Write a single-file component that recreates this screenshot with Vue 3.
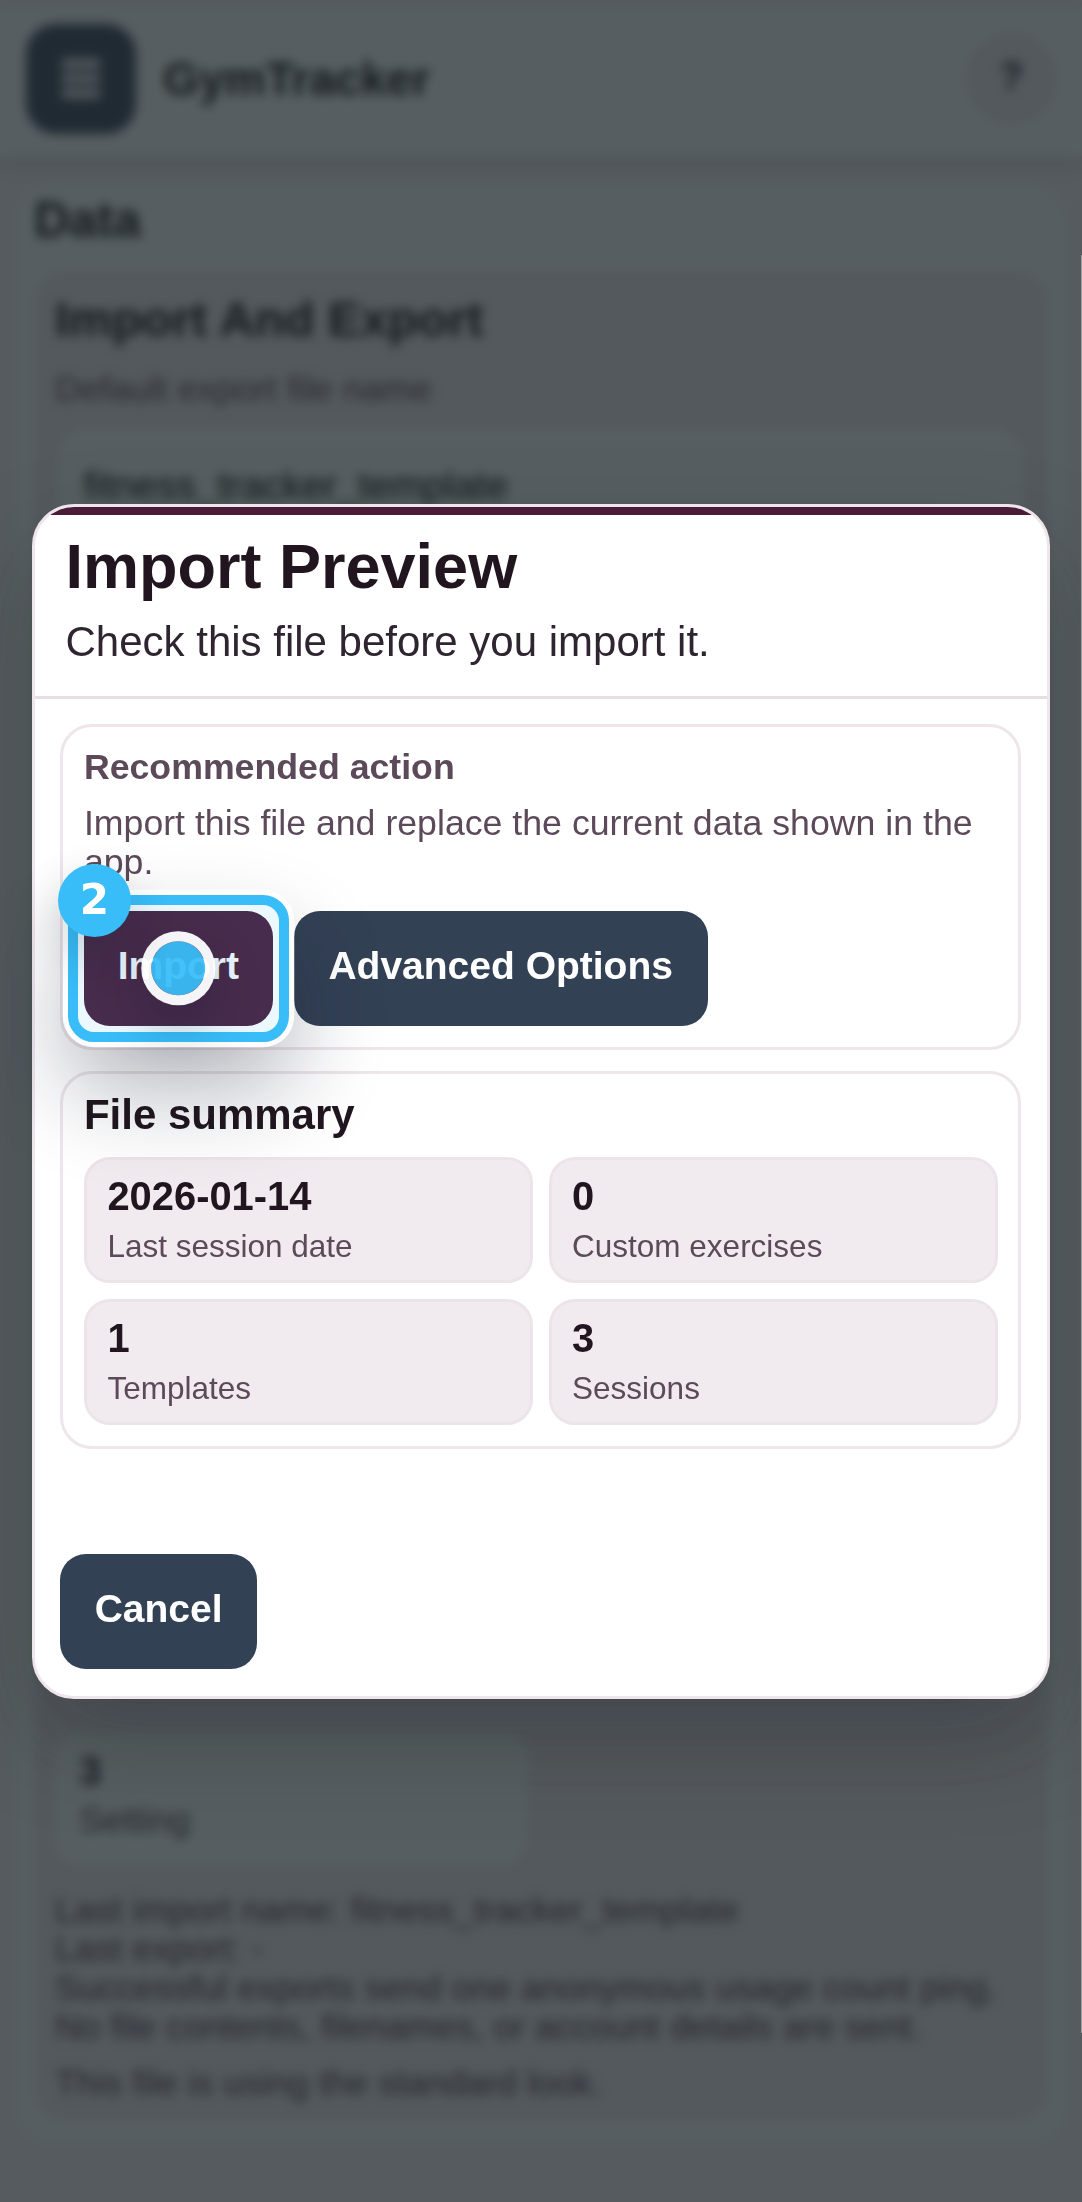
<template>
    <div class="screen">
        <div class="page">
            <header class="topbar">
                <button class="menu-btn" aria-label="Menu">
                    <svg width="38" height="40" viewBox="0 0 38 40">
                        <rect
                            v-for="y in [1, 16, 31]"
                            :key="y"
                            x="0"
                            :y="y"
                            width="38"
                            height="9"
                            fill="#fff"
                        />
                    </svg>
                </button>
                <span class="brand">GymTracker</span>
                <span class="help">?</span>
            </header>

            <main class="section">
                <h2 class="section__title">Data</h2>
                <div class="panel">
                    <h3 class="panel__title">Import And Export</h3>
                    <p class="panel__label">Default export file name</p>
                    <div class="field">fitness_tracker_template</div>
                    <div class="panel__bottom">
                        <div class="setting">
                            <strong>3</strong>
                            <span>Setting</span>
                        </div>
                        <div class="notes">
                            <p v-for="note in notes" :key="note">{{ note }}</p>
                            <p class="notes__last">
                                This file is using the standard look.
                            </p>
                        </div>
                    </div>
                </div>
            </main>
        </div>

        <div class="backdrop">
            <div class="dialog">
                <div class="dialog__head">
                    <h1>Import Preview</h1>
                    <p>Check this file before you import it.</p>
                </div>
                <div class="dialog__body">
                    <section class="box">
                        <h4>Recommended action</h4>
                        <p class="box__text">
                            Import this file and replace the current data shown
                            in the app.
                        </p>
                        <div class="actions">
                            <div class="target">
                                <button class="btn btn--primary">Import</button>
                                <div class="ring"></div>
                                <div class="dot"></div>
                                <div class="badge">2</div>
                            </div>
                            <button class="btn">Advanced Options</button>
                        </div>
                    </section>
                    <section class="box">
                        <h3>File summary</h3>
                        <div class="tiles">
                            <div
                                v-for="item in summary"
                                :key="item.label"
                                class="tile"
                            >
                                <strong>{{ item.value }}</strong>
                                <span>{{ item.label }}</span>
                            </div>
                        </div>
                    </section>
                </div>
                <div class="dialog__foot">
                    <button class="btn">Cancel</button>
                </div>
            </div>
        </div>
        <div class="edge"></div>
    </div>
</template>

<script setup>
const summary = [
    { value: "2026-01-14", label: "Last session date" },
    { value: "0", label: "Custom exercises" },
    { value: "1", label: "Templates" },
    { value: "3", label: "Sessions" },
];

const notes = [
    "Last import name: fitness_tracker_template",
    "Last export: -",
    "Successful exports send one anonymous usage count ping.",
    "No file contents, filenames, or account details are sent.",
];
</script>

<style>
body {
    margin: 0;
    background: #f1ebef;
}
</style>

<style scoped>
.screen {
    position: relative;
    width: 1082px;
    height: 2202px;
    overflow: hidden;
    font-family: "Liberation Sans", Arial, sans-serif;
    color: #21161f;
}

.screen * {
    box-sizing: border-box;
}

h1,
h2,
h3,
h4,
p {
    margin: 0;
}

button {
    font-family: inherit;
    border: 0;
}

/* page behind the dialog */
.page {
    height: 2202px;
    padding-top: 8px;
    background: #f7f3f6;
}

.topbar {
    display: flex;
    align-items: center;
    height: 148px;
    padding: 0 26px 6px 26px;
    background: #fff;
    box-shadow: 0 8px 21px rgba(33, 22, 31, 0.14);
}

.menu-btn {
    display: flex;
    align-items: center;
    justify-content: center;
    width: 110px;
    height: 110px;
    padding: 0 0 2px;
    border-radius: 30px;
    background: #334155;
}

.brand {
    flex: 1;
    margin-left: 27px;
    font-size: 46.2px;
    font-weight: bold;
    color: #0d060c;
}

.help {
    display: flex;
    align-items: center;
    justify-content: center;
    width: 89px;
    height: 89px;
    padding-bottom: 4px;
    margin-top: -2px;
    border: 2px solid #e0d4dc;
    border-radius: 50%;
    background: #f1ebef;
    font-size: 39px;
    font-weight: bold;
}

.section {
    height: 1957px;
    margin: 30px 16px 0;
    padding: 7px 18px;
    border-radius: 36px;
    background: #fff;
}

.section__title {
    height: 78px;
    font-size: 49.3px;
    line-height: 53px;
    color: #0d060c;
}

.panel {
    display: flex;
    flex-direction: column;
    height: 1850px;
    padding: 19px 20px 16px 19px;
    border: 2px solid #ece3e8;
    border-radius: 32px;
    background: #f1ebef;
}

.panel__title {
    font-size: 49px;
    line-height: 54px;
    color: #0d060c;
}

.panel__label {
    margin-top: 24px;
    font-size: 35.7px;
    line-height: 39px;
    color: #5c4a5a;
}

.field {
    height: 118px;
    margin-top: 16px;
    padding: 37px 26px;
    border: 2px solid #e0d4dc;
    border-radius: 32px;
    background: #fff;
    font-size: 39px;
    line-height: 44px;
    color: #000;
}

.panel__bottom {
    margin-top: auto;
}

.setting {
    display: flex;
    flex-direction: column;
    width: 472px;
    height: 132px;
    padding: 16px 24px;
    border-radius: 26px;
    background: #fff;
}

.setting strong {
    font-size: 39.9px;
    line-height: 44px;
}

.setting span {
    margin-top: 8px;
    font-size: 35.7px;
    line-height: 39px;
    color: #4a3a48;
}

.notes {
    margin-top: 26px;
    font-size: 35.7px;
    line-height: 39.3px;
    color: #4f3e4d;
    white-space: nowrap;
}

.notes__last {
    margin-top: 16px;
}

/* dialog */
.backdrop {
    position: absolute;
    inset: 0;
    padding: 504px 32px 0 31.5px;
    background: rgba(25, 34, 39, 0.73);
    backdrop-filter: blur(5.25px);
}

.dialog {
    position: relative;
    display: flex;
    flex-direction: column;
    height: 1194.6px;
    border: 3px solid #eee6eb;
    border-radius: 42px;
    background: #fff;
    box-shadow: 0 42px 94px rgba(15, 18, 24, 0.26);
}

.dialog__head {
    padding: 25px 31px 31px;
    border-top-left-radius: 39px;
    border-top-right-radius: 39px;
    border-bottom: 3px solid #e8dfe5;
    background: linear-gradient(#4a1c3a 7.7px, transparent 7.7px);
}

.dialog__head h1 {
    font-size: 63px;
    line-height: 69px;
}

.dialog__head p {
    margin-top: 18px;
    font-size: 42px;
    line-height: 46px;
    color: #2f2530;
}

.dialog__body {
    display: flex;
    flex-direction: column;
    gap: 21px;
    padding: 25px 26px 0 25.4px;
}

.dialog__foot {
    margin-top: auto;
    padding: 0 25.4px 26.5px;
}

.box {
    padding: 20px 20.5px 21px 21px;
    border: 3px solid #eee6eb;
    border-radius: 32px;
}

.box h4 {
    margin-top: 1px;
    font-size: 35.7px;
    line-height: 39px;
    color: #5c4a5a;
}

.box h3 {
    font-size: 42px;
    line-height: 42px;
}

.box__text {
    margin-top: 17px;
    font-size: 35.7px;
    line-height: 39.3px;
    color: #5c4a5a;
}

.actions {
    display: flex;
    gap: 20.8px;
    margin-top: 28px;
}

.btn {
    height: 115.5px;
    padding: 0 34.8px 5px;
    border-radius: 26px;
    background: #334155;
    color: #fff;
    font-size: 39px;
    font-weight: bold;
    white-space: nowrap;
}

.btn--primary {
    display: block;
    padding: 0 33.8px 5px;
    background: #4a1c3a;
}

/* tour highlight */
.target {
    position: relative;
}

.ring {
    position: absolute;
    inset: -15.75px;
    z-index: 1;
    border: 10.5px solid #38bdf8;
    border-radius: 26px;
    background: rgba(56, 189, 248, 0.1);
    background-clip: padding-box;
    box-shadow: 0 0 0 5.25px rgba(255, 255, 255, 0.95),
        0 47px 94px rgba(15, 23, 42, 0.32);
}

.dot {
    position: absolute;
    top: 50%;
    left: 50%;
    z-index: 2;
    width: 73.5px;
    height: 73.5px;
    border: 10.5px solid rgba(255, 255, 255, 0.95);
    border-radius: 50%;
    background: rgba(56, 189, 248, 0.94);
    background-clip: padding-box;
    box-shadow: 0 21px 47px rgba(15, 23, 42, 0.28);
    transform: translate(-50%, -50%);
}

.badge {
    position: absolute;
    top: -47px;
    left: -26.3px;
    z-index: 2;
    width: 73.5px;
    height: 73.5px;
    border-radius: 50%;
    background: #38bdf8;
    box-shadow: 0 21px 47px rgba(15, 23, 42, 0.2);
    color: #fff;
    font-family: "DejaVu Sans", sans-serif;
    font-size: 42px;
    font-weight: bold;
    line-height: 71px;
    text-align: center;
}

.tiles {
    display: grid;
    grid-template-columns: 1fr 1fr;
    gap: 15.75px;
    margin-top: 21px;
}

.tile {
    display: flex;
    flex-direction: column;
    height: 126.3px;
    padding: 13.75px 20.5px;
    border: 3px solid #ede4e9;
    border-radius: 26px;
    background: #f1ebef;
}

.tile strong {
    font-size: 39.9px;
    line-height: 44px;
}

.tile span {
    margin-top: 11px;
    font-size: 31.5px;
    line-height: 34.6px;
    color: #5c4a5a;
}

.edge {
    position: absolute;
    top: 255px;
    right: 0;
    width: 1px;
    height: 1778px;
    background: #9a9ea0;
}
</style>
